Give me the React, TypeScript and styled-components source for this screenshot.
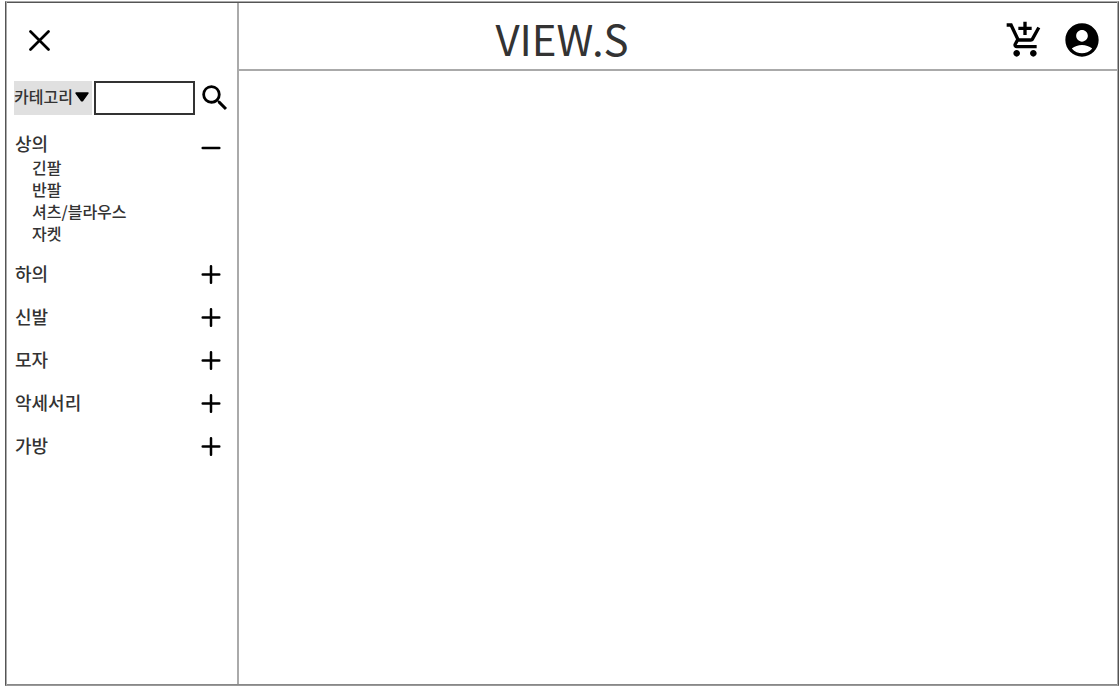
import React, { useState } from "react";
import styled, { createGlobalStyle } from "styled-components";
import { MdAccountCircle, MdOutlineAddShoppingCart, MdSearch } from "react-icons/md";

const GlobalStyle = createGlobalStyle`
  * { box-sizing: border-box; }
  body {
    margin: 0;
    background: #fff;
    color: #333;
    font-family: "Noto Sans CJK KR", "Noto Sans", sans-serif;
    font-weight: 500;
  }
`;

const Frame = styled.div`
  display: flex;
  min-height: calc(100vh - 3px);
  margin: 1px 1px 2px 5px;
  border: 1px solid #555;
  border-top-color: #aaa;
  border-bottom-color: #999;
  box-shadow: inset 1px 0 #aaa, inset -1px 0 #aaa, inset 0 1px #555, inset 0 -1px #888;
  padding: 1px;
`;

const Sidebar = styled.aside`
  flex: 0 0 232px;
  min-width: 0;
  border-right: 2px solid #aaa;
  padding: 16px 5px 16px 7px;
`;

const IconButton = styled.button<{ $width: number; $height: number }>`
  display: flex;
  align-items: center;
  justify-content: center;
  flex: none;
  width: ${(p) => p.$width}px;
  height: ${(p) => p.$height}px;
  padding: 0;
  border: 0;
  background: none;
  color: #000;
  cursor: pointer;
`;

const SearchForm = styled.form`
  display: flex;
  align-items: center;
  height: 34px;
  margin-top: 20px;
`;

const SelectBox = styled.div`
  position: relative;
  flex: none;
  width: 78px;
  height: 34px;
  margin-right: 2px;

  svg {
    position: absolute;
    right: 2px;
    top: 11px;
    pointer-events: none;
  }
`;

const Select = styled.select`
  appearance: none;
  width: 100%;
  height: 100%;
  padding: 0 0 4px;
  border: 0;
  border-radius: 0;
  background: #e0e0e0;
  color: #333;
  font-family: inherit;
  font-size: 16px;
  font-weight: inherit;
`;

const SearchInput = styled.input`
  flex: 1;
  width: 0;
  min-width: 0;
  height: 34px;
  margin-right: 3px;
  padding: 0 6px;
  border: 2px solid #333;
  background: #fff;
  color: #333;
  font-family: inherit;
  font-size: 16px;
`;

const Sections = styled.ul`
  display: flex;
  flex-direction: column;
  gap: 15px;
  margin: 14px 0 0;
  padding: 0 11px 0 1px;
  list-style: none;
`;

const SectionHead = styled.div`
  display: flex;
  align-items: flex-end;
  justify-content: space-between;
  height: 28px;
  font-size: 18px;
  line-height: 28px;
`;

const SubList = styled.ul`
  display: flex;
  flex-direction: column;
  gap: 1px;
  margin: 0;
  padding: 0 0 0 17px;
  list-style: none;
`;

const SubLink = styled.a`
  display: block;
  color: inherit;
  font-size: 16px;
  line-height: 21px;
  text-decoration: none;
`;

const Main = styled.main`
  flex: 1;
  min-width: 0;
`;

const Header = styled.header`
  display: flex;
  align-items: center;
  height: 68px;
  border-bottom: 2px solid #aaa;
  padding: 8px 15px 0 0;
`;

const Title = styled.h1`
  flex: 1;
  margin: 0 120px 0 0;
  padding-bottom: 5px;
  font-size: 42px;
  font-weight: 400;
  line-height: 54px;
  text-align: center;
`;

const Actions = styled.nav`
  display: flex;
  gap: 17px;
`;

const CloseIcon = () => (
  <svg width="22" height="22" viewBox="0 0 22 22" stroke="#000" strokeWidth="2.7" strokeLinecap="round">
    <path d="M2.5 2.5L20.5 20.5M20.5 2.5L2.5 20.5" />
  </svg>
);

const ToggleIcon = ({ open }: { open: boolean }) => (
  <svg width="20" height="20" viewBox="0 0 20 20" stroke="#000" strokeWidth="2.5" strokeLinecap="round">
    <path d={open ? "M1.7 14H18.3" : "M1.7 10.5H18.3M10 2.2V18.8"} />
  </svg>
);

const CaretIcon = () => (
  <svg width="16" height="10" viewBox="0 0 16 10">
    <path d="M2 1H14L8.8 8.4Q8 9.2 7.2 8.4Z" stroke="#000" strokeWidth="1.4" strokeLinejoin="round" />
  </svg>
);

const categories = [
  { name: "상의", items: ["긴팔", "반팔", "셔츠/블라우스", "자켓"] },
  { name: "하의", items: [] },
  { name: "신발", items: [] },
  { name: "모자", items: [] },
  { name: "악세서리", items: [] },
  { name: "가방", items: [] },
];

export default function App() {
  const [opened, setOpened] = useState<string | null>("상의");

  return (
    <>
      <GlobalStyle />
      <Frame>
        <Sidebar>
          <IconButton $width={50} $height={42} type="button" aria-label="닫기">
            <CloseIcon />
          </IconButton>
          <SearchForm onSubmit={(e) => e.preventDefault()}>
            <SelectBox>
              <Select aria-label="카테고리">
                <option>카테고리</option>
              </Select>
              <CaretIcon />
            </SelectBox>
            <SearchInput type="text" aria-label="검색어" />
            <IconButton $width={34} $height={34} type="submit" aria-label="검색">
              <MdSearch size={34} />
            </IconButton>
          </SearchForm>
          <Sections>
            {categories.map(({ name, items }) => {
              const open = opened === name;
              return (
                <li key={name}>
                  <SectionHead>
                    <span>{name}</span>
                    <IconButton
                      $width={20}
                      $height={26}
                      type="button"
                      aria-label={name}
                      aria-expanded={open}
                      onClick={() => setOpened(open ? null : name)}
                    >
                      <ToggleIcon open={open} />
                    </IconButton>
                  </SectionHead>
                  {open && items.length > 0 && (
                    <SubList>
                      {items.map((item) => (
                        <li key={item}>
                          <SubLink href="#">{item}</SubLink>
                        </li>
                      ))}
                    </SubList>
                  )}
                </li>
              );
            })}
          </Sections>
        </Sidebar>
        <Main>
          <Header>
            <Title>VIEW.S</Title>
            <Actions>
              <IconButton $width={40} $height={40} type="button" aria-label="장바구니">
                <MdOutlineAddShoppingCart size={40} />
              </IconButton>
              <IconButton $width={40} $height={40} type="button" aria-label="내 계정">
                <MdAccountCircle size={40} />
              </IconButton>
            </Actions>
          </Header>
        </Main>
      </Frame>
    </>
  );
}
